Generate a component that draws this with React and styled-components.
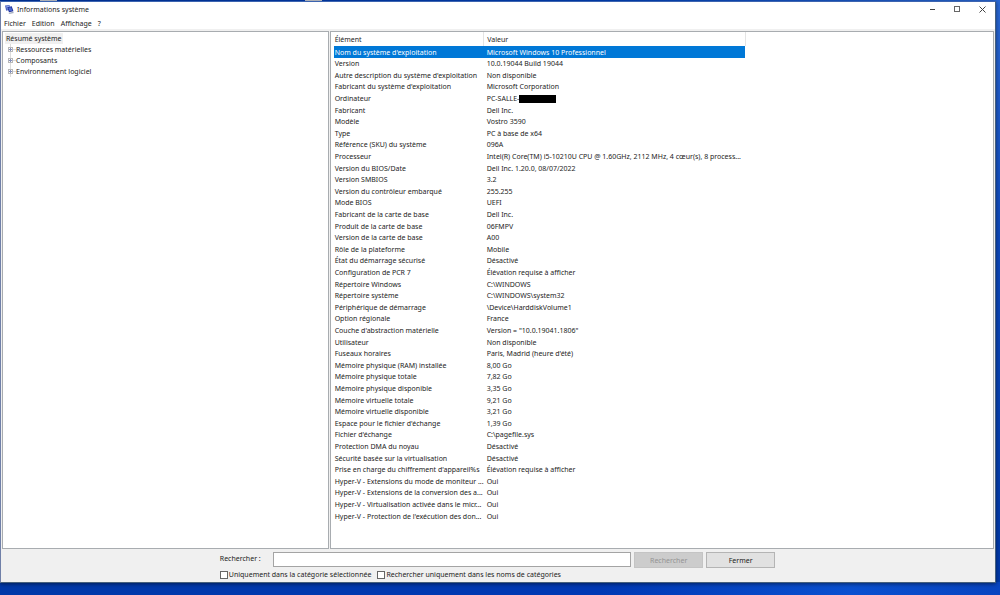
import React, { useState } from "react";
import styled, { createGlobalStyle } from "styled-components";

const GlobalStyle = createGlobalStyle`
  * {
    box-sizing: border-box;
  }

  body {
    margin: 0;
    background: #0038b0;
  }

  body, button, input {
    font-family: "Noto Sans", "Open Sans", sans-serif;
    font-size: 7px;
    line-height: 11px;
    color: #1c1c1c;
  }
`;

const Desktop = styled.div`
  display: flex;
  min-height: 100vh;
  padding: 1px 4px 12px 0;
  background:
    linear-gradient(#c4c8d0, #c4c8d0) 40px 0 / 17px 1px no-repeat,
    linear-gradient(#c4c8d0, #c4c8d0) 305px 0 / 17px 1px no-repeat,
    linear-gradient(90deg, #0038a8, #0038b4 60%, #0a50d0 85%, #0844c0) bottom / 100% 13px no-repeat,
    linear-gradient(180deg, #2a68d4, #0c48bc 40%, #0038a8) right / 5px 100% no-repeat,
    linear-gradient(90deg, #0034a0, #0040b8 60%, #2a68d4);
`;

const Window = styled.div`
  flex: 1;
  min-width: 0;
  display: flex;
  flex-direction: column;
  background: #f0f0f0;
  border: 1px solid #46607c;
  border-left-color: #7080a8;
  border-top-color: #3c64b0;
  box-shadow: 0 1px 4px rgba(0, 0, 0, 0.5);
`;

const TitleBar = styled.header`
  display: flex;
  align-items: center;
  height: 15px;
  padding-left: 4px;
  background: #fff;
`;

const Title = styled.h1`
  flex: 1;
  margin: 0 0 0 3px;
  font-size: 7px;
  font-weight: 400;
`;

const WindowButtons = styled.div`
  display: flex;
`;

const WindowButton = styled.button`
  display: flex;
  align-items: center;
  justify-content: center;
  width: 25px;
  height: 15px;
  padding: 0;
  border: none;
  background: none;
`;

const MenuBar = styled.nav`
  display: flex;
  gap: 6px;
  height: 12px;
  padding-left: 3px;
  background: #fff;
`;

const MenuItem = styled.button`
  padding: 0;
  border: none;
  background: none;
`;

const Panes = styled.main`
  flex: 1;
  display: grid;
  grid-template-columns: 327fr 665fr;
  gap: 1px;
  margin-top: 2px;
  padding: 0 1px;
`;

const Pane = styled.section`
  min-width: 0;
  background: #fff;
  border: 1px solid #a8acb0;
`;

const Tree = styled.ul`
  margin: 0;
  padding: 1px 2px;
  list-style: none;
`;

const TreeRoot = styled.span`
  display: inline-block;
  padding: 0 1px;
  background: #f0f0f0;
`;

const TreeItem = styled.li`
  display: flex;
  align-items: center;
  padding-left: 2px;
`;

const InfoTable = styled.table`
  width: 412px;
  max-width: 100%;
  margin-left: 3px;
  table-layout: fixed;
  border-collapse: collapse;
`;

const HeaderCell = styled.th`
  width: ${(props) => (props.$first ? "150px" : "auto")};
  height: 14px;
  padding: ${(props) => (props.$first ? "1px 0 0 1px" : "1px 0 0 3px")};
  border-right: 1px solid #e4e4e4;
  font-weight: 400;
  text-align: left;
`;

const Row = styled.tr`
  height: 12px;
  background: ${(props) => (props.$selected ? "#0078d7" : "transparent")};
  color: ${(props) => (props.$selected ? "#fff" : "inherit")};

  &:nth-child(5n + 2),
  &:nth-child(5n + 4) {
    height: 11px;
  }
`;

const Cell = styled.td`
  padding: ${(props) => (props.$first ? "0 0 0 1px" : "0 0 0 3px")};
  overflow: hidden;
  text-overflow: ellipsis;
  white-space: nowrap;
`;

const Redacted = styled.span`
  display: inline-block;
  width: 37px;
  height: 8px;
  background: #000;
  vertical-align: middle;
`;

const SearchPanel = styled.form`
  display: grid;
  grid-template-columns: minmax(0, 218fr) 53px minmax(0, 357fr) 72px 72px minmax(0, 219fr);
  grid-template-rows: 16px 11px;
  row-gap: 1px;
  align-items: start;
  height: 33px;
  padding-top: 3px;
`;

const SearchLabel = styled.label`
  grid-column: 2;
  padding-top: 1px;
`;

const SearchInput = styled.input`
  width: 100%;
  height: 15px;
  padding: 0 3px;
  border: 1px solid #a4a4a4;
  background: #fff;
`;

const PushButton = styled.button`
  height: 16px;
  margin-left: 3px;
  padding: 0;
  border: 1px solid #b4b4b4;
  background: #e1e1e1;

  &:disabled {
    border-color: #c4c4c4;
    background: #cccccc;
    color: #949494;
  }
`;

const Options = styled.div`
  grid-column: 2 / -1;
  display: flex;
  gap: 6px;
`;

const CheckLabel = styled.label`
  display: flex;
  align-items: center;
  gap: 1px;
  white-space: nowrap;
`;

const CheckBox = styled.input`
  appearance: none;
  width: 8px;
  height: 8px;
  margin: 0;
  border: 1px solid #666;
  background: #fff;

  &:checked {
    background: #0078d7;
  }
`;

const categories = [
  "Ressources matérielles",
  "Composants",
  "Environnement logiciel",
];

const items = [
  ["Nom du système d'exploitation", "Microsoft Windows 10 Professionnel"],
  ["Version", "10.0.19044 Build 19044"],
  ["Autre description du système d'exploitation", "Non disponible"],
  ["Fabricant du système d'exploitation", "Microsoft Corporation"],
  ["Ordinateur", "PC-SALLE-", true],
  ["Fabricant", "Dell Inc."],
  ["Modèle", "Vostro 3590"],
  ["Type", "PC à base de x64"],
  ["Référence (SKU) du système", "096A"],
  [
    "Processeur",
    "Intel(R) Core(TM) i5-10210U CPU @ 1.60GHz, 2112 MHz, 4 cœur(s), 8 process...",
  ],
  ["Version du BIOS/Date", "Dell Inc. 1.20.0, 08/07/2022"],
  ["Version SMBIOS", "3.2"],
  ["Version du contrôleur embarqué", "255.255"],
  ["Mode BIOS", "UEFI"],
  ["Fabricant de la carte de base", "Dell Inc."],
  ["Produit de la carte de base", "06FMPV"],
  ["Version de la carte de base", "A00"],
  ["Rôle de la plateforme", "Mobile"],
  ["État du démarrage sécurisé", "Désactivé"],
  ["Configuration de PCR 7", "Élévation requise à afficher"],
  ["Répertoire Windows", "C:\\WINDOWS"],
  ["Répertoire système", "C:\\WINDOWS\\system32"],
  ["Périphérique de démarrage", "\\Device\\HarddiskVolume1"],
  ["Option régionale", "France"],
  ["Couche d'abstraction matérielle", "Version = \"10.0.19041.1806\""],
  ["Utilisateur", "Non disponible"],
  ["Fuseaux horaires", "Paris, Madrid (heure d'été)"],
  ["Mémoire physique (RAM) installée", "8,00 Go"],
  ["Mémoire physique totale", "7,82 Go"],
  ["Mémoire physique disponible", "3,35 Go"],
  ["Mémoire virtuelle totale", "9,21 Go"],
  ["Mémoire virtuelle disponible", "3,21 Go"],
  ["Espace pour le fichier d'échange", "1,39 Go"],
  ["Fichier d'échange", "C:\\pagefile.sys"],
  ["Protection DMA du noyau", "Désactivé"],
  ["Sécurité basée sur la virtualisation", "Désactivé"],
  ["Prise en charge du chiffrement d'appareil%s", "Élévation requise à afficher"],
  ["Hyper-V - Extensions du mode de moniteur ...", "Oui"],
  ["Hyper-V - Extensions de la conversion des a...", "Oui"],
  ["Hyper-V - Virtualisation activée dans le micr...", "Oui"],
  ["Hyper-V - Protection de l'exécution des don...", "Oui"],
];

function ComputerIcon() {
  return (
    <svg width="9" height="9" viewBox="0 0 16 16" aria-hidden="true">
      <path d="M0 1l8-1 2 8-8 2z" fill="#4a60c0" />
      <path d="M2 2l6-1 1 6-5 1z" fill="#8ca4ec" />
      <path d="M4 4l8-2 3 9-8 2z" fill="#1c2c98" />
      <path d="M6 5l5-1 2 6-5 1z" fill="#4868d0" />
      <path d="M6 14l8-2 2 2-8 2z" fill="#a8b0c0" />
    </svg>
  );
}

function ExpandIcon() {
  return (
    <svg width="9" height="11" viewBox="0 0 9 11" aria-hidden="true">
      <path d="M3.5 0v11M6 5.5h3" stroke="#dcdcdc" fill="none" />
      <rect x="1.5" y="3.5" width="4" height="4" fill="#fff" stroke="#b8b8b8" />
      <path d="M2 5.5h3M3.5 4v3" stroke="#8490bc" fill="none" />
    </svg>
  );
}

export default function App() {
  const [selected, setSelected] = useState(0);
  const [query, setQuery] = useState("");

  return (
    <Desktop>
      <GlobalStyle />
      <Window>
        <TitleBar>
          <ComputerIcon />
          <Title>Informations système</Title>
          <WindowButtons>
            <WindowButton aria-label="Réduire">
              <svg width="7" height="7" viewBox="0 0 7 7">
                <path d="M1 3.5h5" stroke="#444" />
              </svg>
            </WindowButton>
            <WindowButton aria-label="Agrandir">
              <svg width="7" height="7" viewBox="0 0 7 7">
                <rect x="0.5" y="0.5" width="5" height="5" fill="none" stroke="#666" />
              </svg>
            </WindowButton>
            <WindowButton aria-label="Fermer la fenêtre">
              <svg width="7" height="7" viewBox="0 0 7 7">
                <path d="M0.5 0.5l6 6M6.5 0.5l-6 6" stroke="#444" />
              </svg>
            </WindowButton>
          </WindowButtons>
        </TitleBar>
        <MenuBar>
          <MenuItem>Fichier</MenuItem>
          <MenuItem>Edition</MenuItem>
          <MenuItem>Affichage</MenuItem>
          <MenuItem>?</MenuItem>
        </MenuBar>
        <Panes>
          <Pane>
            <Tree>
              <li>
                <TreeRoot>Résumé système</TreeRoot>
              </li>
              {categories.map((name) => (
                <TreeItem key={name}>
                  <ExpandIcon />
                  {name}
                </TreeItem>
              ))}
            </Tree>
          </Pane>
          <Pane>
            <InfoTable>
              <thead>
                <tr>
                  <HeaderCell $first>Élément</HeaderCell>
                  <HeaderCell>Valeur</HeaderCell>
                </tr>
              </thead>
              <tbody>
                {items.map(([name, value, redacted], idx) => (
                  <Row
                    key={name}
                    $selected={idx === selected}
                    onClick={() => setSelected(idx)}
                  >
                    <Cell $first>{name}</Cell>
                    <Cell>
                      {value}
                      {redacted && <Redacted />}
                    </Cell>
                  </Row>
                ))}
              </tbody>
            </InfoTable>
          </Pane>
        </Panes>
        <SearchPanel onSubmit={(e) => e.preventDefault()}>
          <SearchLabel htmlFor="query">Rechercher :</SearchLabel>
          <SearchInput
            id="query"
            value={query}
            onChange={(e) => setQuery(e.target.value)}
          />
          <PushButton type="submit" disabled={!query}>
            Rechercher
          </PushButton>
          <PushButton type="button">Fermer</PushButton>
          <Options>
            <CheckLabel>
              <CheckBox type="checkbox" />
              Uniquement dans la catégorie sélectionnée
            </CheckLabel>
            <CheckLabel>
              <CheckBox type="checkbox" />
              Rechercher uniquement dans les noms de catégories
            </CheckLabel>
          </Options>
        </SearchPanel>
      </Window>
    </Desktop>
  );
}
